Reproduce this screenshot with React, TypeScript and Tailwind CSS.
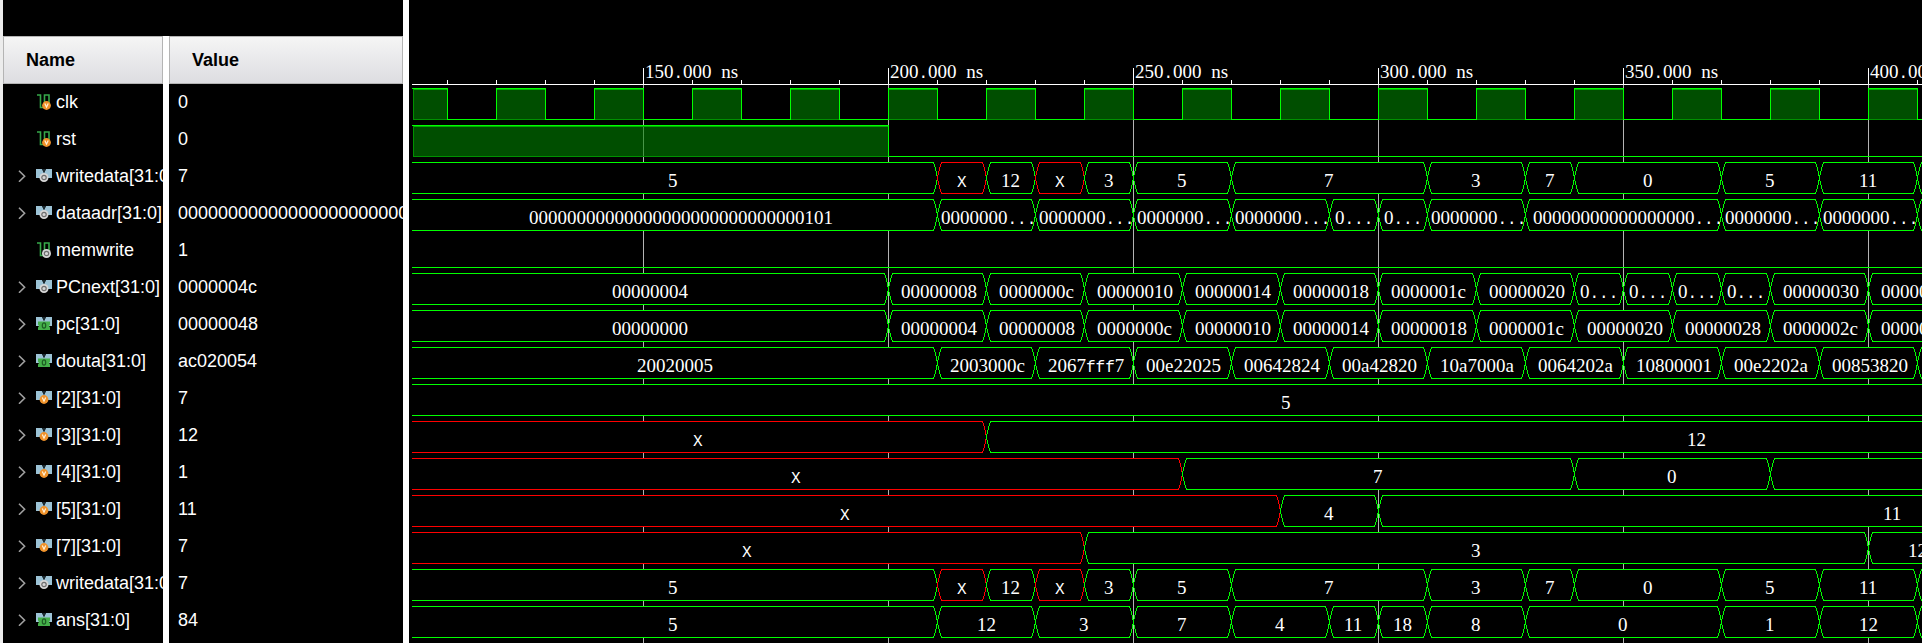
import { Fragment } from "react";

type Badge = "reg" | "port" | "var";
type Segment = [end: number, value: string];
type Signal = {
  name: string;
  value: string;
  badge: Badge;
  bus?: Segment[];
  high?: [number, number][];
};

const WRITE_DATA: Segment[] = [
  [210, "5"], [220, "X"], [230, "12"], [240, "X"], [250, "3"], [270, "5"],
  [310, "7"], [330, "3"], [340, "7"], [370, "0"], [390, "5"], [410, "11"], [450, ""],
];

const SIGNALS: Signal[] = [
  {
    name: "clk",
    value: "0",
    badge: "var",
    high: [
      [0, 110],
      ...Array.from({ length: 15 }, (_, i): [number, number] => [120 + i * 20, 130 + i * 20]),
    ],
  },
  { name: "rst", value: "0", badge: "var", high: [[0, 200]] },
  { name: "writedata[31:0]", value: "7", badge: "reg", bus: WRITE_DATA },
  {
    name: "dataadr[31:0]",
    value: "00000000000000000000000001010100",
    badge: "reg",
    bus: [
      [210, "00000000000000000000000000000101"], [230, "0000000..."], [250, "0000000..."],
      [270, "0000000..."], [290, "0000000..."], [300, "0..."], [310, "0..."],
      [330, "0000000..."], [370, "00000000000000000..."], [390, "0000000..."],
      [410, "0000000..."], [450, ""],
    ],
  },
  { name: "memwrite", value: "1", badge: "reg", high: [] },
  {
    name: "PCnext[31:0]",
    value: "0000004c",
    badge: "reg",
    bus: [
      [200, "00000004"], [220, "00000008"], [240, "0000000c"], [260, "00000010"],
      [280, "00000014"], [300, "00000018"], [320, "0000001c"], [340, "00000020"],
      [350, "0..."], [360, "0..."], [370, "0..."], [380, "0..."], [400, "00000030"],
      [420, "00000034"],
    ],
  },
  {
    name: "pc[31:0]",
    value: "00000048",
    badge: "port",
    bus: [
      [200, "00000000"], [220, "00000004"], [240, "00000008"], [260, "0000000c"],
      [280, "00000010"], [300, "00000014"], [320, "00000018"], [340, "0000001c"],
      [360, "00000020"], [380, "00000028"], [400, "0000002c"], [420, "00000030"],
    ],
  },
  {
    name: "douta[31:0]",
    value: "ac020054",
    badge: "port",
    bus: [
      [210, "20020005"], [230, "2003000c"], [250, "2067fff7"], [270, "00e22025"],
      [290, "00642824"], [310, "00a42820"], [330, "10a7000a"], [350, "0064202a"],
      [370, "10800001"], [390, "00e2202a"], [410, "00853820"], [450, ""],
    ],
  },
  { name: "[2][31:0]", value: "7", badge: "var", bus: [[460, "5"]] },
  { name: "[3][31:0]", value: "12", badge: "var", bus: [[220, "X"], [510, "12"]] },
  {
    name: "[4][31:0]",
    value: "1",
    badge: "var",
    bus: [[260, "X"], [340, "7"], [380, "0"], [510, ""]],
  },
  { name: "[5][31:0]", value: "11", badge: "var", bus: [[280, "X"], [300, "4"], [510, "11"]] },
  { name: "[7][31:0]", value: "7", badge: "var", bus: [[240, "X"], [400, "3"], [420, "12"]] },
  { name: "writedata[31:0]", value: "7", badge: "reg", bus: WRITE_DATA },
  {
    name: "ans[31:0]",
    value: "84",
    badge: "port",
    bus: [
      [210, "5"], [230, "12"], [250, "3"], [270, "7"], [290, "4"], [300, "11"],
      [310, "18"], [330, "8"], [370, "0"], [390, "1"], [410, "12"], [450, ""],
    ],
  },
];

const ROW_PITCH = 37;
const FIRST_TOP = 88;
const WAVE_HEIGHT = 31;
const AXIS_Y = 84;
const LEFT = 3;
const CHAR_WIDTH = 9;

/** Horizontal position of a time in nanoseconds. */
const timeX = (ns: number) => Math.round(234 + (ns - 150) * 4.9);

function BadgeMark({ badge, cx, cy }: { badge: Badge; cx: number; cy: number }) {
  if (badge === "reg") {
    return (
      <>
        <circle cx={cx} cy={cy} r="4.5" fill="#d6d6d6" />
        <circle cx={cx} cy={cy} r="2.2" fill="#d6d6d6" stroke="#6e6e6e" strokeWidth="1.2" />
      </>
    );
  }
  if (badge === "var") {
    return (
      <>
        <circle cx={cx} cy={cy} r="4.4" fill="#f0922a" />
        <path
          d={`M${cx - 1.7} ${cy - 1.9}L${cx} ${cy + 1.7}L${cx + 1.7} ${cy - 1.9}`}
          fill="none"
          stroke="#fff3dc"
          strokeWidth="1.2"
        />
      </>
    );
  }
  return (
    <>
      <path
        d={`M${cx - 6} ${cy - 4}h12v3l-1 1.5 1 1.5v2.5h-12v-2.5l1-1.5-1-1.5z`}
        fill="#45b04a"
      />
      <ellipse cx={cx} cy={cy} rx="1.7" ry="2.7" fill="none" stroke="#1d5c24" strokeWidth="1.2" />
    </>
  );
}

function SignalIcon({ bus, badge }: { bus: boolean; badge: Badge }) {
  return (
    <svg className="h-4 w-4 shrink-0" viewBox="0 0 16 16" aria-hidden="true">
      {bus ? (
        <>
          <path d="M0 1h6l2 4 2-4h6v9H0z" fill="#9cc3d6" />
          <path d="M6 1l2 4 2-4z" fill="#1c2a30" />
          <BadgeMark badge={badge} cx={8} cy={9.5} />
        </>
      ) : (
        <>
          <path d="M1 1h3.5v12.5h4V1h4.5v9" fill="none" stroke="#36a84a" strokeWidth="1.6" />
          <BadgeMark badge={badge} cx={10.5} cy={11.5} />
        </>
      )}
    </svg>
  );
}

function WaveText({ x, y, text }: { x: number; y: number; text: string }) {
  return (
    <text
      x={x}
      y={y}
      className="whitespace-pre fill-white font-['Liberation_Serif',serif] text-[19px]"
    >
      {text.split(/([. Xf]+)/).map((part, i) =>
        i % 2 ? (
          <tspan key={i} className="font-['Liberation_Mono',monospace] text-[16px]">
            {part}
          </tspan>
        ) : (
          <Fragment key={i}>{part}</Fragment>
        ),
      )}
    </text>
  );
}

function BusWave({ segments, top }: { segments: Segment[]; top: number }) {
  const y1 = top + 0.5;
  const y2 = y1 + WAVE_HEIGHT;
  const mid = (y1 + y2) / 2;
  return (
    <g>
      {segments.map(([end, value], i) => {
        const start = i ? timeX(segments[i - 1][0]) : 0;
        const a = start + 0.5;
        const b = timeX(end) + 0.5;
        const head = i
          ? `M${a} ${mid}L${a + 1} ${mid - 5}L${a + 3} ${y1 + 3}L${a + 4} ${y1}`
          : `M${LEFT} ${y1}`;
        const tail = i
          ? `H${a + 4}L${a + 3} ${y2 - 3}L${a + 1} ${mid + 5}L${a} ${mid}`
          : `H${LEFT}`;
        const body = `H${b - 4}L${b - 3} ${y1 + 3}L${b - 1} ${mid - 5}L${b} ${mid}L${b - 1} ${mid + 5}L${b - 3} ${y2 - 3}L${b - 4} ${y2}`;
        return (
          <g key={i}>
            <path d={head + body + tail} fill="#000" stroke={value === "X" ? "#f00" : "#0f0"} />
            <WaveText
              x={Math.round((start + timeX(end) - CHAR_WIDTH * value.length - 1) / 2)}
              y={top + 25}
              text={value}
            />
          </g>
        );
      })}
    </g>
  );
}

function BitWave({ high, top }: { high: [number, number][]; top: number }) {
  const y1 = top + 0.5;
  const y2 = y1 + WAVE_HEIGHT;
  let low = LEFT;
  return (
    <g fill="none">
      {high.map(([from, to]) => {
        const first = from === 0;
        const a = (first ? 4 : timeX(from)) + 0.5;
        const b = timeX(to) + 0.5;
        const lowStart = low;
        low = b;
        return (
          <g key={from}>
            {!first && <path d={`M${lowStart} ${y2}H${a}`} stroke="#0f0" />}
            <rect
              x={a}
              y={y1}
              width={b - a}
              height={WAVE_HEIGHT}
              fill="#008200"
              fillOpacity={0.6}
              stroke="#009000"
            />
            <path d={`M${a} ${y1 + 1}H${b}`} stroke="#00b000" />
            <path
              d={first ? `M${LEFT} ${y1}H${b}V${y2}` : `M${a} ${y2}V${y1}H${b}V${y2}`}
              stroke="#0f0"
            />
          </g>
        );
      })}
      <line x1={low} x2="100%" y1={y2} y2={y2} stroke="#0f0" />
    </g>
  );
}

function WaveArea() {
  const ticks = Array.from({ length: 36 }, (_, i) => 110 + i * 10);
  const majors = ticks.filter((t) => t % 50 === 0);
  return (
    <svg
      className="min-w-0 flex-1 self-stretch bg-black"
      shapeRendering="crispEdges"
      role="img"
      aria-label="Waveforms"
    >
      {majors.map((t) => (
        <line key={t} x1={timeX(t) + 0.5} x2={timeX(t) + 0.5} y1={AXIS_Y} y2="100%" stroke="#b4b4b4" />
      ))}
      {ticks.map((t) => (
        <line
          key={t}
          x1={timeX(t) + 0.5}
          x2={timeX(t) + 0.5}
          y1={t % 50 ? AXIS_Y - 4 : AXIS_Y - 16}
          y2={AXIS_Y}
          stroke="#fff"
        />
      ))}
      <line x1={LEFT} x2="100%" y1={AXIS_Y + 0.5} y2={AXIS_Y + 0.5} stroke="#fff" />
      {majors.map((t) => (
        <WaveText key={t} x={timeX(t) + 2} y={78} text={`${t}.000 ns`} />
      ))}
      {SIGNALS.map((s, i) => {
        const top = FIRST_TOP + i * ROW_PITCH;
        return s.bus ? (
          <BusWave key={i} segments={s.bus} top={top} />
        ) : (
          <BitWave key={i} high={s.high ?? []} top={top} />
        );
      })}
    </svg>
  );
}

export default function App() {
  return (
    <main className="flex min-h-screen overflow-hidden bg-black font-['Liberation_Sans',sans-serif] text-lg leading-6 text-white">
      <section className="flex shrink-0 flex-col border-l-[3px] border-r-[6px] border-l-[#ececec] border-r-white bg-black pt-9">
        <table className="w-[400px] table-fixed border-separate border-spacing-0 text-left">
          <colgroup>
            <col className="w-[166px]" />
            <col />
          </colgroup>
          <thead>
            <tr className="h-12 text-black">
              <th className="border-r-[6px] border-white p-0">
                <div className="flex h-12 items-center border border-[#b4b4b4] bg-linear-to-b from-[#f5f5f5] to-[#dddde1] pl-[22px]">
                  Name
                </div>
              </th>
              <th className="p-0">
                <div className="flex h-12 items-center border border-[#b4b4b4] bg-linear-to-b from-[#f5f5f5] to-[#dddde1] pl-[22px]">
                  Value
                </div>
              </th>
            </tr>
          </thead>
          <tbody>
            {SIGNALS.map((s, i) => (
              <tr key={i} className="h-[37px]">
                <td className="overflow-hidden border-r-[6px] border-white p-0 pb-0.5">
                  <div className="flex items-center gap-1 whitespace-nowrap pl-3">
                    {s.bus ? (
                      <button
                        type="button"
                        aria-label={`Expand ${s.name}`}
                        className="flex h-4 w-[17px] shrink-0 items-center pl-[3px]"
                      >
                        <svg className="h-3 w-2" viewBox="0 0 8 12" aria-hidden="true">
                          <path d="M1 0.7L6.6 6.2L1 11.7" fill="none" stroke="#a0a0a0" strokeWidth="1.6" />
                        </svg>
                      </button>
                    ) : (
                      <span className="w-[17px] shrink-0" />
                    )}
                    <SignalIcon bus={!!s.bus} badge={s.badge} />
                    <span>{s.name}</span>
                  </div>
                </td>
                <td className="overflow-hidden whitespace-nowrap p-0 pb-0.5 pl-[9px]">{s.value}</td>
              </tr>
            ))}
          </tbody>
        </table>
        <div className="w-[166px] flex-1 border-r-[6px] border-white" />
      </section>
      <WaveArea />
    </main>
  );
}
